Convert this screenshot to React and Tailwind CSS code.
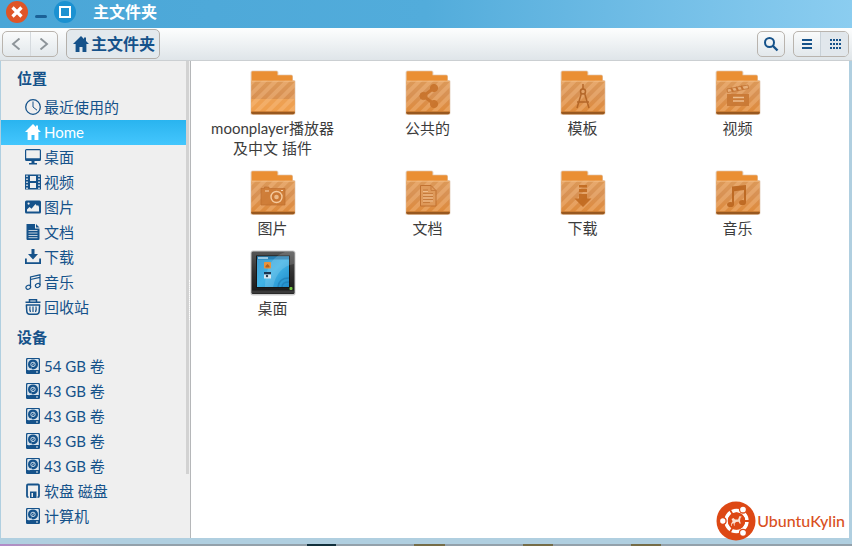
import React, { useState } from 'react';

const places = [
  { id: 'recent', label: '最近使用的', icon: 'clock' },
  { id: 'home', label: 'Home', icon: 'home' },
  { id: 'desktop', label: '桌面', icon: 'monitor' },
  { id: 'videos', label: '视频', icon: 'film' },
  { id: 'pictures', label: '图片', icon: 'picture' },
  { id: 'documents', label: '文档', icon: 'document' },
  { id: 'downloads', label: '下载', icon: 'download' },
  { id: 'music', label: '音乐', icon: 'music' },
  { id: 'trash', label: '回收站', icon: 'trash' },
];

const devices = [
  { id: 'disk-1', label: '54 GB 卷', icon: 'disk' },
  { id: 'disk-2', label: '43 GB 卷', icon: 'disk' },
  { id: 'disk-3', label: '43 GB 卷', icon: 'disk' },
  { id: 'disk-4', label: '43 GB 卷', icon: 'disk' },
  { id: 'disk-5', label: '43 GB 卷', icon: 'disk' },
  { id: 'floppy', label: '软盘 磁盘', icon: 'floppy' },
  { id: 'computer', label: '计算机', icon: 'disk' },
];

const files = [
  { name: 'moonplayer播放器及中文 插件', emblem: 'plain' },
  { name: '公共的', emblem: 'share' },
  { name: '模板', emblem: 'compass' },
  { name: '视频', emblem: 'clapper' },
  { name: '图片', emblem: 'camera' },
  { name: '文档', emblem: 'page' },
  { name: '下载', emblem: 'arrow' },
  { name: '音乐', emblem: 'note' },
  { name: '桌面', emblem: 'desktop' },
];

const glyphs = {
  clock: (
    <g fill="none" stroke="currentColor">
      <circle cx="8" cy="8" r="7.3" strokeWidth="1.3" />
      <path d="M8 2.5V8l4 3.2" strokeWidth="1" />
    </g>
  ),
  home: <path d="M8 0 0 8h2.6v8h3.9v-5h3v5h3.900V8H16l-3-3V1.600h-2v1.500z" fill="currentColor" />,
  monitor: (
    <g fill="currentColor">
      <path fillRule="evenodd" d="M1.500 0h13A1.500 1.500 0 0 1 16 1.500v9a1.500 1.500 0 0 1-1.500 1.500h-13A1.500 1.500 0 0 1 0 10.500v-9A1.500 1.500 0 0 1 1.500 0zM1.200 1.200v8h13.600v-8z" />
      <path d="M6.500 12h3v2H12v1.500H4V14h2.500z" />
    </g>
  ),
  film: (
    <g>
      <path fillRule="evenodd" fill="currentColor" d="M0 .5h16v15H0zM5 2v5h6V2zM5 9v5h6V9z" />
      <path d="M2 1.500v14M14 1.500v14" stroke="#efefef" strokeWidth="1.500" strokeDasharray="1.500 1.500" />
    </g>
  ),
  picture: (
    <g>
      <rect y="1.500" width="16" height="13" rx="1.500" fill="currentColor" />
      <path d="M2 12.500v-2l2.500-2.500 2 1.800 4-4.800 1.500 2 1-1 1 2v4.500z" fill="#efefef" />
      <circle cx="3.600" cy="4.600" r="1.100" fill="#efefef" />
    </g>
  ),
  document: (
    <g>
      <path d="M1.500 0H10v4.500h4.500V15a1 1 0 0 1-1 1h-11a1 1 0 0 1-1-1zM11 0l3.500 3.500H11z" fill="currentColor" />
      <path d="M3.500 6.500h9M3.500 9h9M3.500 11.500h9M3.500 13.700h9" stroke="#efefef" strokeWidth=".8" />
    </g>
  ),
  download: (
    <g fill="currentColor">
      <path d="M6.500 0h3v5H13l-5 5.500L3 5h3.500z" />
      <path d="M0 9.500h1.800v3.700h12.400V9.500H16V15H0z" />
    </g>
  ),
  music: (
    <g fill="none" stroke="currentColor" strokeWidth="1.200">
      <path d="M5.500 13V3L15 .8V11M5.500 5.500 15 3.300" />
      <ellipse cx="3.300" cy="13.300" rx="2.400" ry="1.900" transform="rotate(-25 3.300 13.300)" />
      <ellipse cx="12.700" cy="11.500" rx="2.400" ry="1.900" transform="rotate(-25 12.700 11.500)" />
    </g>
  ),
  trash: (
    <g fill="none" stroke="currentColor" strokeWidth="1.500">
      <path d="M4.500 2.500V.8h7v1.700M.5 3.200h15" />
      <path d="M.8 5.900h14.400M1.400 6l.4 6.500q.2 2.700 2.800 2.700h6.800q2.600 0 2.800-2.700l.4-6.500" />
      <path d="M5 7.500q-.6 3 .5 5.500M8 7.500V13M11 7.500q.6 3-.5 5.500" strokeWidth="1.200" />
    </g>
  ),
  disk: (
    <g>
      <rect x="1" y="0" width="14" height="16" rx="1.200" fill="currentColor" />
      <path d="M2.200 12V2q0-1 1-1h9.600q1 0 1 1v10z" fill="#dce6ee" />
      <circle cx="8" cy="6.400" r="5" fill="currentColor" />
      <circle cx="8" cy="6.400" r="2.200" fill="none" stroke="#dce6ee" strokeWidth=".9" />
      <path d="m7 7.300 2.300-2M3.800 12.300l3-2.300" stroke="#dce6ee" strokeWidth=".9" />
      <path d="M11.500 13h1v2h-1z" fill="#efefef" />
    </g>
  ),
  floppy: (
    <g>
      <path d="M3.500 14.200H3.200A1.200 1.200 0 0 1 2 13V2.500q0-1 1-1h10q1 0 1 1V13q0 1.200-1 1.200h-.5" fill="none" stroke="currentColor" strokeWidth="1.800" />
      <path fillRule="evenodd" d="M5 8.500h6.500V15H5zM6.500 10v4H8v-4z" fill="currentColor" />
    </g>
  ),
};

const Glyph = ({ name, className = 'size-4' }) => (
  <svg viewBox="0 0 16 16" className={className} aria-hidden="true">
    {glyphs[name]}
  </svg>
);

const emblems = {
  plain: <path d="M1.200 29h43.600v12.200H1.200z" fill="#ffb25c" opacity=".5" />,
  share: (
    <g fill="#c8732b" stroke="#c8732b">
      <path d="M29 18 18.500 26 29 34" fill="none" strokeWidth="3" />
      <circle cx="29" cy="18" r="3.600" />
      <circle cx="18.500" cy="26" r="3.600" />
      <circle cx="29" cy="34" r="3.600" />
    </g>
  ),
  compass: (
    <g fill="none" stroke="#b06224" strokeWidth="1.500">
      <path d="M23 14v5M21.500 23 17 38M24.500 23 29 38M17 32h12" />
      <circle cx="23" cy="21.500" r="2.500" fill="#e3a46a" />
    </g>
  ),
  clapper: (
    <g>
      <path d="M12 24h22v12H12z" fill="#c97834" />
      <path d="m12 19 21-4 .6 3.500-21 4z" fill="#e9b27c" stroke="#bd6c2c" strokeWidth=".8" />
      <path d="m16 18 2 3.500M21 17l2 3.500M26 16l2 3.500" stroke="#c26f2d" strokeWidth="2" />
      <path d="M18 27.500h11M18 31h11" stroke="#f0c193" strokeWidth="1.300" />
    </g>
  ),
  camera: (
    <g>
      <path d="M11 18.500h3.500V17H19v1.500h16V35H11z" fill="#cd7b35" stroke="#bb6a2b" strokeWidth=".7" />
      <circle cx="26.500" cy="27" r="5.500" fill="#c9742f" stroke="#f7cfa4" strokeWidth="1.400" />
      <circle cx="26.500" cy="27" r="2.300" fill="#f0bf8d" />
      <path d="M15 21h4M31 20.500h2" stroke="#f9dcbb" strokeWidth="1.200" />
    </g>
  ),
  page: (
    <g fill="none" stroke="#bf6e2d">
      <path d="M15.500 15.500H26l5 5V36H15.500z" fill="#df9a5b" />
      <path d="M26 15.500v5h5M18 20h5M18 23.500h10M18 26.500h10M18 29.500h10M18 32.500h7" stroke="#c5793a" />
      <path d="M18 21.500h5M18 25h10M18 28h10M18 31h10" stroke="#f6cda3" strokeWidth=".8" />
    </g>
  ),
  arrow: (
    <path d="M19 15h8v2.500h-8zM19 19h8v3h-8zM19 24h8v4.500h4.500L23 37l-8.500-8.500H19z" fill="#c0691f" />
  ),
  note: (
    <g fill="#bb661f">
      <path d="M17 16.500 31 15v17h-2V20l-10 1.200V35h-2z" />
      <ellipse cx="15.500" cy="34.500" rx="3.400" ry="2.600" />
      <ellipse cx="27.500" cy="32.500" rx="3.400" ry="2.600" />
    </g>
  ),
};

const FolderIcon = ({ emblem }) => (
  <svg viewBox="0 0 46 46" className="size-[46px]" aria-hidden="true">
    <defs>
      <linearGradient id={`front-${emblem}`} x1="0" y1="0" x2="0" y2="1">
        <stop offset="0" stopColor="#dd9957" />
        <stop offset=".4" stopColor="#d89255" />
        <stop offset="1" stopColor="#e08a38" />
      </linearGradient>
      <pattern id={`stripe-${emblem}`} width="8" height="8" patternUnits="userSpaceOnUse" patternTransform="rotate(45)">
        <rect width="4" height="8" fill="#ffcf9e" opacity=".3" />
      </pattern>
    </defs>
    <path d="M.5 44V2.500Q.5.500 2.500.5h24q2 0 2 2v2H41q2 0 2 2V10h1q1.500 0 1.500 1.500V43q0 2-2 2h-41q-2 0-2-1z" fill="#b88a65" opacity=".35" />
    <path d="M1.500 14V2.500q0-1.300 1.300-1.300h23.500q1.200 0 1.200 1.300v2.700h13.700q1.300 0 1.300 1.300V14z" fill="#ea8f33" />
    <path d="M2 10.800h42q.8 0 .8.800v31q0 1.600-1.600 1.600H2.800q-1.600 0-1.600-1.600v-31q0-.8.800-.8z" fill={`url(#front-${emblem})`} />
    {emblem === 'plain' && emblems.plain}
    <path d="M1.200 10.800h43.600v30.400H1.200z" fill={`url(#stripe-${emblem})`} />
    <path d="M1.500 11.200h43" stroke="#f5c089" strokeWidth=".8" />
    {emblem !== 'plain' && <g opacity=".9">{emblems[emblem]}</g>}
    <path d="M1.200 41.800h43.600v.8q0 1.600-1.600 1.600H2.800q-1.600 0-1.600-1.600z" fill="#98581f" />
  </svg>
);

const DesktopIcon = () => (
  <svg viewBox="0 0 46 46" className="size-[46px]" aria-hidden="true">
    <defs>
      <linearGradient id="frame" x1="0" y1="0" x2="0" y2="1">
        <stop offset="0" stopColor="#565656" />
        <stop offset=".5" stopColor="#303030" />
        <stop offset="1" stopColor="#171717" />
      </linearGradient>
      <linearGradient id="screen" x1="0" y1="0" x2="1" y2="1">
        <stop offset="0" stopColor="#3f9bd0" />
        <stop offset=".5" stopColor="#42b4e6" />
        <stop offset="1" stopColor="#1f8bca" />
      </linearGradient>
    </defs>
    <rect x=".5" y=".5" width="45" height="45" rx="2.500" fill="#999" opacity=".5" />
    <rect x="1.500" y="1.500" width="43" height="42.500" rx="1.500" fill="url(#frame)" />
    <path d="M2 40.500h42v3H2z" fill="#3a3a3a" />
    <path d="M6 5.500h34V38H6z" fill="#151515" />
    <path d="M7 6.500h32V37H7z" fill="url(#screen)" />
    <path d="M7 6.500h32v3H7z" fill="#2880b4" />
    <path d="M8 8h10" stroke="#d6effa" strokeWidth="1.300" />
    <path d="M44 2v12Q27 17 23 37H15Q15 9 35 2z" fill="#fff" opacity=".15" />
    <path d="M28 37q1-9 11-9M32 37q0-5 7-5" fill="none" stroke="#1d76ae" strokeWidth="1.500" opacity=".6" />
    <rect x="14" y="12" width="7" height="6.500" rx=".8" fill="#e6943f" />
    <path d="m15.500 16 2-2 2 2v1.500h-4z" fill="#b5611c" />
    <path d="M14 22h7v2.500h-7z" fill="#1c3550" />
    <path d="M14 24.500h7v4h-7z" fill="#dae8f0" />
    <circle cx="17" cy="26" r="1.200" fill="#2f3e4e" />
    <rect x="39.500" y="37" width="3" height="3" rx="1" fill="#75c843" />
  </svg>
);

const UbuntuMark = () => (
  <svg viewBox="0 0 40 40" className="size-10" aria-hidden="true">
    <circle cx="20" cy="20" r="19.500" fill="#dd4814" />
    <circle cx="20.500" cy="20" r="10.500" fill="none" stroke="#fff" strokeWidth="3.500" />
    <g stroke="#dd4814" strokeWidth="1.300">
      <path d="m20.500 20 14 0M20.500 20l-7-12M20.500 20l-7 12" strokeWidth="1.800" />
      <circle cx="6.800" cy="20" r="3.300" fill="#fff" />
      <circle cx="27" cy="8.500" r="3.500" fill="#fff" />
      <circle cx="27" cy="31.800" r="3.500" fill="#fff" />
    </g>
    <circle cx="20.500" cy="20" r="8.600" fill="#dd4814" />
    <path d="m15.500 18 2-1 1.500 1.500h3l1.500-3.500 2.300.8-1.300 1-.5 3.200.8 2.500-1 .2-1.300-2-2.500.3-1.500 1.700.3 1.800-.8.200-.5-2.700-1.500 1-.3 2-.7-.2.300-2.500 1.300-2z" fill="#fbe0d2" />
  </svg>
);

const SidebarSection = ({ title, items, selected, onSelect }) => (
  <section>
    <h2 className="flex h-[34px] items-center pl-4 text-[15px] font-bold">{title}</h2>
    <ul>
      {items.map((item) => (
        <li key={item.id}>
          <button
            type="button"
            onClick={() => onSelect(item.id)}
            className={
              item.id === selected
                ? 'flex h-[25px] w-full items-center gap-[3px] bg-linear-to-b from-[#29b4ef] to-[#43c6fd] pb-[2px] pl-6 text-white'
                : 'flex h-[25px] w-full items-center gap-[3px] pb-[2px] pl-6'
            }
          >
            <Glyph name={item.icon} />
            <span className="whitespace-nowrap">{item.label}</span>
          </button>
        </li>
      ))}
    </ul>
  </section>
);

const App = () => {
  const [selected, setSelected] = useState('home');

  return (
    <div className="flex min-h-screen flex-col bg-[#b0cfe0] font-['Lato','Noto_Sans_CJK_SC',sans-serif] text-[15px] leading-5 text-[#15528a]">
      {/* Title bar */}
      <header className="flex h-7 items-start gap-[7px] bg-linear-to-r from-[#4aa6d7] via-[#52acdb] to-[#8bcdf0] pl-[6px]">
        <button type="button" aria-label="关闭" className="mt-px size-[22px] rounded-full bg-[#df5527]">
          <svg viewBox="0 0 22 22" aria-hidden="true">
            <path d="m6.500 6.500 9 9m0-9-9 9" stroke="#fff" strokeWidth="3.200" />
          </svg>
        </button>
        <button type="button" aria-label="最小化" className="flex h-6 w-3 items-center pt-2">
          <span className="h-[3px] w-full rounded-sm bg-[#1b6197]" />
        </button>
        <button type="button" aria-label="最大化" className="mt-px size-[22px] rounded-full bg-[#1b91d1]">
          <svg viewBox="0 0 22 22" aria-hidden="true">
            <path d="M6 6h10v10H6z" fill="none" stroke="#fff" strokeWidth="2" />
          </svg>
        </button>
        <h1 className="ml-[10px] text-base leading-6 font-bold text-white">主文件夹</h1>
      </header>

      {/* Toolbar */}
      <nav className="flex h-[33px] items-center border-b border-[#cbcfd2] bg-linear-to-b from-[#fdfefe] to-[#dfe5e9] pr-[3px] pl-[2px]">
        <div className="flex h-[26px] w-14 divide-x divide-[#d5dade] rounded-[5px] border border-[#b9b4ae] text-[#8d9499]">
          <button type="button" aria-label="后退" className="flex flex-1 items-center justify-center">
            <svg viewBox="0 0 12 12" className="size-3" aria-hidden="true">
              <path d="M9.500.500 3 6l6.500 5.500" fill="none" stroke="currentColor" strokeWidth="1.900" />
            </svg>
          </button>
          <button type="button" aria-label="前进" className="flex flex-1 items-center justify-center">
            <svg viewBox="0 0 12 12" className="size-3" aria-hidden="true">
              <path d="m2.500.500 6.500 5.500-6.500 5.500" fill="none" stroke="currentColor" strokeWidth="1.900" />
            </svg>
          </button>
        </div>
        <button
          type="button"
          className="ml-2 flex h-[30px] items-center gap-[2px] rounded-[5px] border border-[#b4b0ab] bg-[#e3e9ed] pr-1 pl-[6px] text-base font-bold"
        >
          <Glyph name="home" />
          主文件夹
        </button>
        <button
          type="button"
          aria-label="搜索"
          className="ml-auto flex h-[26px] w-7 items-center justify-center rounded-[5px] border border-[#b9b4ae]"
        >
          <svg viewBox="0 0 16 16" className="size-4" aria-hidden="true">
            <circle cx="6.500" cy="6.500" r="4.500" fill="none" stroke="currentColor" strokeWidth="2" />
            <path d="m9.500 9.500 5 5" stroke="currentColor" strokeWidth="2.400" />
          </svg>
        </button>
        <div className="ml-2 flex h-[26px] w-14 divide-x divide-[#c9d2d9] overflow-hidden rounded-[5px] border border-[#b9b4ae]">
          <button type="button" aria-label="列表视图" className="flex flex-1 items-center justify-center">
            <svg viewBox="0 0 10 10" className="size-[10px]" aria-hidden="true">
              <path d="M0 1h10M0 5h10M0 9h10" stroke="currentColor" strokeWidth="1.800" />
            </svg>
          </button>
          <button type="button" aria-label="图标视图" className="flex flex-1 items-center justify-center bg-[#e1e7ec] pl-[2px]">
            <svg viewBox="0 0 11 10" className="h-[10px] w-[11px]" aria-hidden="true">
              <path d="M0 1h11M0 5h11M0 9h11" stroke="currentColor" strokeWidth="2" strokeDasharray="2 1" />
            </svg>
          </button>
        </div>
      </nav>

      {/* Sidebar and files */}
      <div className="flex grow pr-[3px] pl-px">
        <aside className="flex w-[190px] shrink-0 border-r border-[#b5b7b9] bg-[#efefef]">
          <div className="grow pb-[9px]">
            <SidebarSection title="位置" items={places} selected={selected} onSelect={setSelected} />
            <SidebarSection title="设备" items={devices} selected={selected} onSelect={setSelected} />
          </div>
          <div className="mb-16 w-[3px] bg-[#d2d2d2]" />
          <div className="w-px self-center border-r border-dotted border-white py-5" />
        </aside>

        <main className="relative grow bg-white">
          <ul className="grid grid-cols-[repeat(auto-fill,155px)] gap-y-3 pt-[9px] pl-1 text-[#3c3c3c]">
            {files.map((file) => (
              <li key={file.name}>
                <button type="button" className="flex w-full flex-col items-center gap-[2px]">
                  {file.emblem === 'desktop' ? <DesktopIcon /> : <FolderIcon emblem={file.emblem} />}
                  <span className="w-[135px] text-center break-all">{file.name}</span>
                </button>
              </li>
            ))}
          </ul>

          {/* Brand */}
          <div className="absolute right-1 -bottom-[3px] flex items-center gap-px text-base text-[#d9501e]">
            <UbuntuMark />
            <span className="font-medium">UbuntuKylin</span>
          </div>
        </main>
      </div>

      <footer className="mt-[6px] h-[2px] bg-[linear-gradient(to_right,#b28ac9_0,#a99fb0_60px,#93a1ab_120px,#93a1ab_307px,#12303c_307px,#12303c_336px,#93a1ab_336px,#93a1ab_414px,#766d48_414px,#766d48_445px,#93a1ab_445px,#93a1ab_523px,#766d48_523px,#766d48_553px,#93a1ab_553px,#93a1ab_631px,#766d48_631px,#766d48_661px,#93a1ab_661px)]" />
    </div>
  );
};

export default App;
